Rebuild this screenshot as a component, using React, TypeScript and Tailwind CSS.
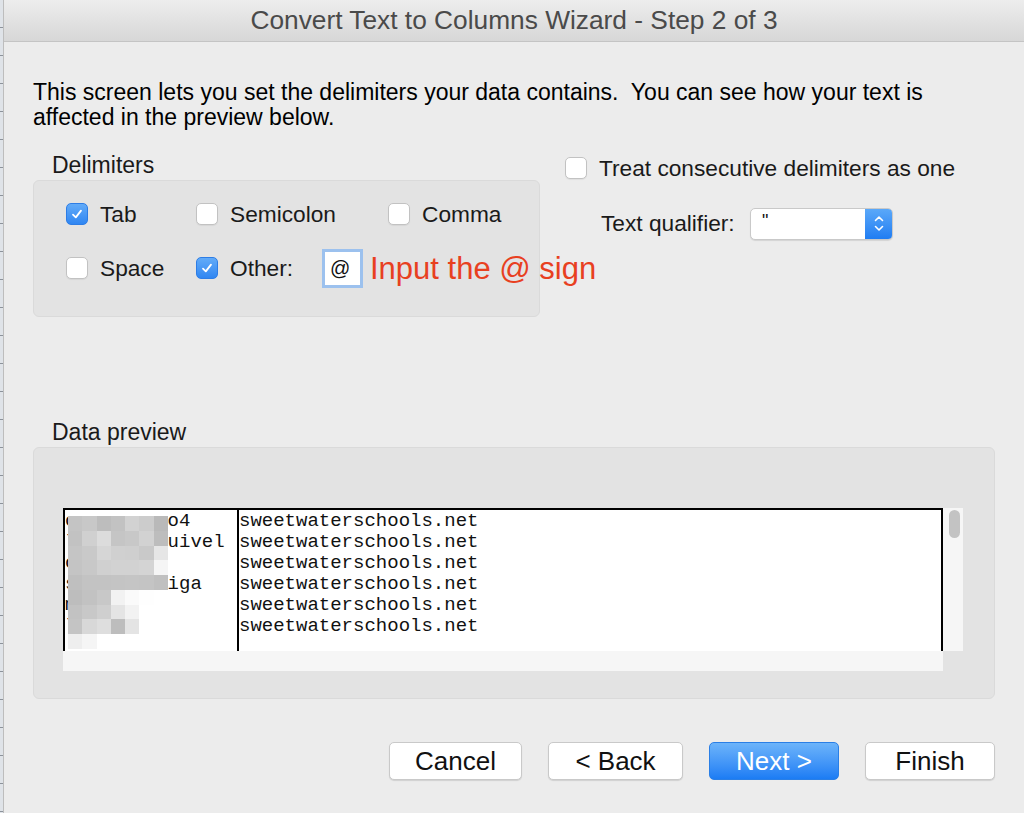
const SANS = "font-['Liberation_Sans',Arial,sans-serif]";
const MONO = "font-['Liberation_Mono','DejaVu_Sans_Mono',monospace]";

// pixelated redaction over the first column
const MOSAIC = [
  ['#c4c4c4', '#c8c8c8', '#bdbdbd', '#c2c2c2', '#d2d2d2', '#cccccc', '#b9b9b9'],
  ['#c2c2c2', '#d0d0d0', '#dcdcdc', '#c5c5c5', '#c8c8c8', '#d2d2d2', '#bdbdbd'],
  ['#c5c5c5', '#c9c9c9', '#d6d6d6', '#d0d0d0', '#cfcfcf', '#c9c9c9', '#e6e6e6'],
  ['#c4c4c4', '#c8c8c8', '#d0d0d0', '#d2d2d2', '#d2d2d2', '#d4d4d4', '#f5f5f5'],
  ['#bfbfbf', '#c3c3c3', '#c3c3c3', '#c4c4c4', '#c5c5c5', '#c4c4c4', '#c0c0c0'],
  ['#bdbdbd', '#c2c2c2', '#c8c8c8', '#f2f2f2', '#fafafa', '#fefefe', '#ffffff'],
  ['#c2c2c2', '#c8c8c8', '#cfcfcf', '#e4e4e4', '#f2f2f2', '#ffffff', '#ffffff'],
  ['#c4c4c4', '#d8d8d8', '#dedede', '#bdbdbd', '#e4e4e4', '#ffffff', '#ffffff'],
  ['#eeeeee', '#f5f5f5', '#ffffff', '#ffffff', '#ffffff', '#ffffff', '#ffffff'],
];

const FIRST_COL = ['c        o4', 'l        uivel', 'c', 's        iga', 'm', 'l'];

function Checkbox({ checked = false }: { checked?: boolean }) {
  if (checked) {
    return (
      <span className="w-[22px] h-[22px] shrink-0 rounded-[5px] border border-[#2d7de6] bg-gradient-to-b from-[#62abf8] to-[#2f86f2] flex items-center justify-center">
        <svg width="14" height="14" viewBox="0 0 14 14">
          <path d="M3 7.6 L5.8 10.4 L11 3.6" fill="none" stroke="white" strokeWidth="1.8" strokeLinecap="round" strokeLinejoin="round" />
        </svg>
      </span>
    );
  }
  return <span className="w-[22px] h-[22px] shrink-0 rounded-[5px] border border-[#c2c2c2] bg-white shadow-[0_1px_1px_rgba(0,0,0,0.06)]" />;
}

function Option({ label, checked, className = '' }: { label: string; checked?: boolean; className?: string }) {
  return (
    <div className={`flex items-center gap-[12px] shrink-0 whitespace-nowrap ${className}`}>
      <Checkbox checked={checked} />
      <span className="text-[22.7px] leading-none text-[#1a1a1a]">{label}</span>
    </div>
  );
}

function Button({ label, primary = false, className = '' }: { label: string; primary?: boolean; className?: string }) {
  return (
    <button
      className={`h-[38px] rounded-[5px] text-[26px] leading-none flex items-center justify-center ${
        primary
          ? 'bg-gradient-to-b from-[#6cb4fa] to-[#1b7cf4] text-white border border-[#2a7fe6]'
          : 'bg-white text-[#111] border border-[#c9c9c9] shadow-[0_1px_1px_rgba(0,0,0,0.12)]'
      } ${className}`}
    >
      {label}
    </button>
  );
}

export default function App() {
  return (
    <div className={`w-[1024px] h-[813px] flex bg-[#ececec] overflow-hidden ${SANS}`}>
      {/* sliver of the spreadsheet behind the sheet */}
      <div className="w-[3px] shrink-0 bg-[repeating-linear-gradient(to_bottom,#dfe3e8_0px,#dfe3e8_27px,#8d939b_27px,#8d939b_28px)]" />

      <div className="flex-1 flex flex-col border-l border-[#bdbdbd]">
        {/* Title bar */}
        <div className="h-[42px] shrink-0 flex items-center justify-center bg-gradient-to-b from-[#ededed] to-[#d7d7d7] border-b border-[#c4c4c4]">
          <span className="text-[26.3px] leading-none text-[#4a4a4a]">Convert Text to Columns Wizard - Step 2 of 3</span>
        </div>

        <div className="pl-[29px] pr-[29px]">
          <p className="mt-[38px] text-[23px] leading-[25px] text-black whitespace-nowrap">
            This screen lets you set the delimiters your data contains.&nbsp; You can see how your text is
            <br />
            affected in the preview below.
          </p>

          <div className="flex mt-[23px]">
            {/* Delimiters group */}
            <div className="w-[507px] shrink-0">
              <div className="pl-[19px] h-[24px] text-[23px] leading-[24px] text-[#1a1a1a]">Delimiters</div>
              <div className="mt-[3px] h-[137px] rounded-[6px] bg-[#e3e3e3] border border-[#dadada] pl-[32px] pt-[22px]">
                <div className="flex items-center h-[22px]">
                  <Option label="Tab" checked className="w-[130px]" />
                  <Option label="Semicolon" className="w-[192px]" />
                  <Option label="Comma" />
                </div>
                <div className="flex items-center h-[40px] mt-[23px] whitespace-nowrap">
                  <Option label="Space" className="w-[130px]" />
                  <Option label="Other:" checked className="w-[126px]" />
                  <div className="w-[41px] h-[39px] shrink-0 border-[3px] border-[#9cc1ee] bg-white flex items-center pl-[5px]">
                    <span className="text-[20px] leading-none text-[#111]">@</span>
                  </div>
                  <span className="ml-[7px] text-[31px] leading-none text-[#e8401f]">Input the @ sign</span>
                </div>
              </div>
            </div>

            {/* right side options */}
            <div className="ml-[25px] pt-[4px]">
              <Option label="Treat consecutive delimiters as one" />
              <div className="flex items-center mt-[28px] pl-[36px]">
                <span className="text-[22.7px] leading-none text-[#1a1a1a] w-[149px] whitespace-nowrap">Text qualifier:</span>
                <div className="w-[143px] h-[32px] flex rounded-[5px] bg-white border border-[#c9c9c9] shadow-[0_1px_1px_rgba(0,0,0,0.1)] overflow-hidden">
                  <span className="flex-1 pl-[11px] pt-[3px] text-[18px] leading-none text-[#111]">"</span>
                  <div className="w-[27px] bg-gradient-to-b from-[#5aa8f9] to-[#1f7df2] flex flex-col items-center justify-center gap-[3px]">
                    <svg width="10" height="7" viewBox="0 0 10 7">
                      <path d="M1.5 5.5 L5 2 L8.5 5.5" fill="none" stroke="white" strokeWidth="1.6" strokeLinecap="round" strokeLinejoin="round" />
                    </svg>
                    <svg width="10" height="7" viewBox="0 0 10 7">
                      <path d="M1.5 1.5 L5 5 L8.5 1.5" fill="none" stroke="white" strokeWidth="1.6" strokeLinecap="round" strokeLinejoin="round" />
                    </svg>
                  </div>
                </div>
              </div>
            </div>
          </div>

          {/* Data preview */}
          <div className="mt-[103px] pl-[19px] h-[24px] text-[23px] leading-[24px] text-[#1a1a1a]">Data preview</div>
          <div className="mt-[3px] h-[252px] w-[962px] rounded-[6px] bg-[#e3e3e3] border border-[#dadada] pl-[29px] pt-[60px]">
            <div className="flex">
              <div className="w-[880px]">
                <div className={`h-[143px] bg-white border-2 border-b-0 border-black flex text-[19px] leading-[21px] text-[#111] ${MONO}`}>
                  <div className="relative w-[174px] border-r-2 border-black pt-[1px]">
                    {FIRST_COL.map((line, i) => (
                      <div key={i} className="whitespace-pre h-[21px]">{line}</div>
                    ))}
                    <svg
                      className="absolute left-[3px] top-[6px]"
                      width="100"
                      height="133"
                      viewBox="0 0 7 9"
                      preserveAspectRatio="none"
                      shapeRendering="crispEdges"
                    >
                      {MOSAIC.map((row, r) =>
                        row.map((c, col) => <rect key={`${r}-${col}`} x={col} y={r} width="1.02" height="1.02" fill={c} />)
                      )}
                    </svg>
                  </div>
                  <div className="pt-[1px]">
                    {Array.from({ length: 6 }).map((_, i) => (
                      <div key={i} className="h-[21px]">sweetwaterschools.net</div>
                    ))}
                  </div>
                </div>
                <div className="h-[20px] bg-[#f6f6f6]" />
              </div>
              <div className="w-[20px] h-[143px] bg-[#f6f6f6] pl-[6px] pt-[2px]">
                <div className="w-[11px] h-[28px] rounded-full bg-[#c3c3c3]" />
              </div>
            </div>
          </div>

          {/* Buttons */}
          <div className="mt-[43px] flex justify-end gap-[26px]">
            <Button label="Cancel" className="w-[133px]" />
            <Button label="< Back" className="w-[135px]" />
            <Button label="Next >" primary className="w-[130px]" />
            <Button label="Finish" className="w-[130px]" />
          </div>
        </div>
      </div>
    </div>
  );
}
